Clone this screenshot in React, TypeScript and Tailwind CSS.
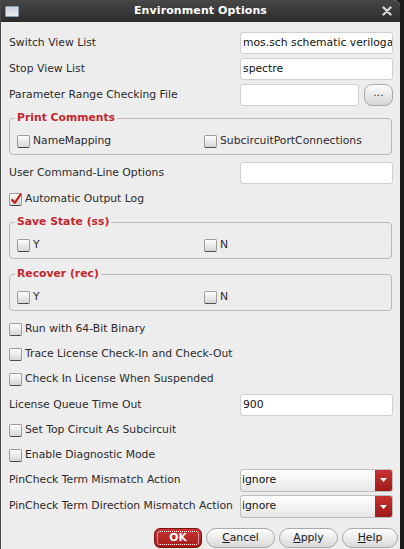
import React from "react";

const font = "font-['DejaVu_Sans',sans-serif]";

function Box({ checked }: { checked?: boolean }) {
  return (
    <span className="relative w-[13px] h-[13px] shrink-0 rounded-[2px] border border-[#9c9c9c] border-b-[#4a4a4a] bg-gradient-to-b from-[#fdfdfd] to-[#d6d6d6]">
      {checked && (
        <svg
          className="absolute -top-[2px] left-0"
          width="13"
          height="14"
          viewBox="0 0 13 14"
        >
          <path
            d="M2.2 8 L4.8 10.8 L10.5 2.5"
            fill="none"
            stroke="#c41e20"
            strokeWidth="2.2"
            strokeLinecap="round"
            strokeLinejoin="round"
          />
        </svg>
      )}
    </span>
  );
}

function Check({ label, checked, h = "h-[25px]" }: { label: string; checked?: boolean; h?: string }) {
  return (
    <div className={`flex items-center ${h} gap-[3px]`}>
      <Box checked={checked} />
      <span>{label}</span>
    </div>
  );
}

function TextField({ value, w = "w-[153px]" }: { value?: string; w?: string }) {
  return (
    <div
      className={`${w} h-[22px] shrink-0 rounded-[3px] border border-[#cfcfcf] bg-white px-[2px] flex items-center overflow-hidden whitespace-nowrap text-[#111]`}
    >
      {value}
    </div>
  );
}

function FieldRow({ label, children }: { label: string; children: React.ReactNode }) {
  return (
    <div className="flex items-center justify-between h-[26px]">
      <span>{label}</span>
      {children}
    </div>
  );
}

function Group({
  title,
  left,
  right,
  className,
}: {
  title: string;
  left: string;
  right: string;
  className: string;
}) {
  return (
    <div
      className={`${className} mr-[1px] h-[37px] rounded-[4px] border border-[#b9b9b9] pl-[7px] flex flex-col`}
    >
      <span className="-mt-[8px] h-[14px] leading-[14px] ml-[-2px] px-[2px] w-fit bg-[#ededed] font-bold text-[#c1272d]">
        {title}
      </span>
      <div className="flex mt-[6px] h-[20px] items-center">
        <div className="w-[187px] flex items-center gap-[3px]">
          <Box />
          <span>{left}</span>
        </div>
        <div className="flex items-center gap-[3px]">
          <Box />
          <span>{right}</span>
        </div>
      </div>
    </div>
  );
}

function Select({ value }: { value: string }) {
  return (
    <div className="w-[153px] h-[23px] rounded-[3px] border border-[#bdbdbd] bg-gradient-to-b from-white to-[#e6e6e6] flex items-stretch overflow-hidden">
      <span className="flex-1 flex items-center pl-[1px] text-[#111]">{value}</span>
      <span className="w-[17px] bg-gradient-to-b from-[#c8322f] to-[#9e1b1a] flex items-center justify-center">
        <svg width="7" height="4" viewBox="0 0 7 4">
          <path d="M0 0 H7 L3.5 4 Z" fill="#fff" />
        </svg>
      </span>
    </div>
  );
}

function Btn({
  children,
  w,
  primary,
}: {
  children: React.ReactNode;
  w: string;
  primary?: boolean;
}) {
  if (primary)
    return (
      <div
        className={`${w} h-[20px] rounded-[6px] border border-[#7d1010] bg-gradient-to-b from-[#c93330] to-[#a11b19] p-[2px] flex`}
      >
        <div className="flex-1 rounded-[3px] border border-dotted border-white flex items-center justify-center font-bold text-white">
          {children}
        </div>
      </div>
    );
  return (
    <div
      className={`${w} h-[20px] rounded-full border border-[#a9a9a9] bg-gradient-to-b from-[#fdfdfd] to-[#d9d9d9] flex items-center justify-center text-[#222]`}
    >
      {children}
    </div>
  );
}

export default function App() {
  return (
    <div className={`w-[404px] h-[549px] bg-[#1a1a1a] flex overflow-hidden ${font} text-[10.8px] text-[#2b2b2b]`}>
      <div className="w-[400px] h-full flex flex-col border-l border-[#4a4a4a] bg-[#ededed] rounded-tr-[6px] overflow-hidden">
        <div className="h-[22px] shrink-0 bg-gradient-to-b from-[#474747] to-[#2c2c2c] flex items-center px-[4px] relative">
          <span className="w-[14px] h-[11px] rounded-[1px] border border-[#8aa0b8] bg-gradient-to-b from-[#c9d3de] to-[#e8eaec]" />
          <span className="flex-1 text-center font-bold text-[11px] text-white tracking-[0.1px]">
            Environment Options
          </span>
          <svg width="10" height="10" viewBox="0 0 10 10" className="mr-[4px]">
            <path d="M1.5 1.5 L8.5 8.5 M8.5 1.5 L1.5 8.5" stroke="#d8d8d8" strokeWidth="2.4" strokeLinecap="round" />
          </svg>
        </div>

        <div className="flex flex-col pl-[8px] pr-[7px] pt-[8px]">
          <FieldRow label="Switch View List">
            <TextField value="mos.sch schematic veriloga" />
          </FieldRow>
          <FieldRow label="Stop View List">
            <TextField value="spectre" />
          </FieldRow>
          <FieldRow label="Parameter Range Checking File">
            <div className="flex items-center gap-[5px]">
              <TextField w="w-[119px]" />
              <div className="w-[29px] h-[22px] rounded-[8px] border border-[#a9a9a9] bg-gradient-to-b from-[#fdfdfd] to-[#d4d4d4] flex items-center justify-center text-[#333] pb-[3px]">
                ...
              </div>
            </div>
          </FieldRow>

          <Group className="mt-[10px]" title="Print Comments" left="NameMapping" right="SubcircuitPortConnections" />

          <div className="mt-[5px]">
            <FieldRow label="User Command-Line Options">
              <TextField />
            </FieldRow>
          </div>
          <div className="h-[26px] flex items-center">
            <Check label="Automatic Output Log" checked />
          </div>

          <Group className="mt-[10px]" title="Save State (ss)" left="Y" right="N" />
          <Group className="mt-[15px]" title="Recover (rec)" left="Y" right="N" />

          <div className="mt-[6px] flex flex-col">
            <Check label="Run with 64-Bit Binary" />
            <Check label="Trace License Check-In and Check-Out" />
            <Check label="Check In License When Suspended" />
            <div className="flex items-center justify-between h-[26px]">
              <span>License Queue Time Out</span>
              <TextField value="900" />
            </div>
            <Check label="Set Top Circuit As Subcircuit" />
            <Check label="Enable Diagnostic Mode" h="h-[24px]" />
          </div>

          <FieldRow label="PinCheck Term Mismatch Action">
            <Select value="ignore" />
          </FieldRow>
          <div className="flex items-center justify-between h-[27px]">
            <span>PinCheck Term Direction Mismatch Action</span>
            <Select value="ignore" />
          </div>

          <div className="mt-[8px] flex justify-end gap-[4px] -mr-[5px]">
            <Btn w="w-[48px]" primary>
              OK
            </Btn>
            <Btn w="w-[69px]">
              <span>
                <span className="underline">C</span>ancel
              </span>
            </Btn>
            <Btn w="w-[59px]">
              <span>
                <span className="underline">A</span>pply
              </span>
            </Btn>
            <Btn w="w-[56px]">
              <span>
                <span className="underline">H</span>elp
              </span>
            </Btn>
          </div>
        </div>
      </div>
      <div className="flex-1" />
    </div>
  );
}
